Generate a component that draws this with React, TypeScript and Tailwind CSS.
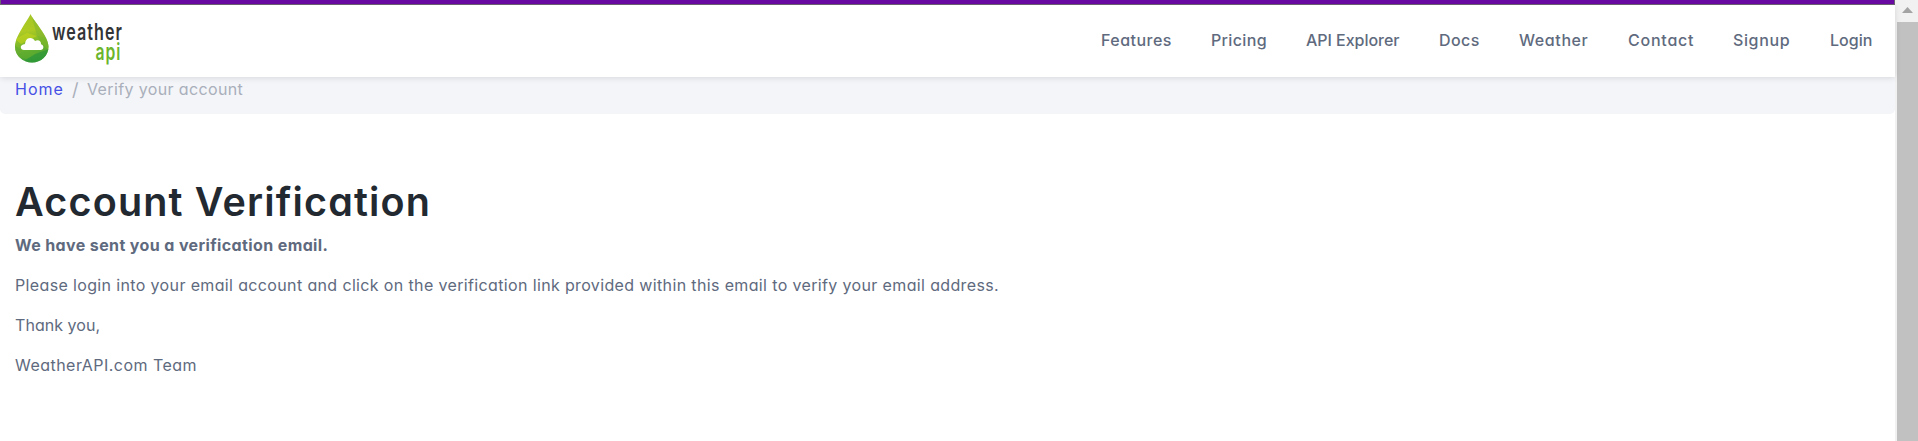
const navItems = [
  { label: "Features", box: "w-[110px]", tracking: "tracking-[0.48px]" },
  { label: "Pricing", box: "w-[95px]", tracking: "tracking-[0.35px]" },
  { label: "API Explorer", box: "w-[133px]", tracking: "tracking-[-0.03px]" },
  { label: "Docs", box: "w-[80px]", tracking: "tracking-[0.4px]" },
  { label: "Weather", box: "w-[109px]", tracking: "tracking-[0.6px]" },
  { label: "Contact", box: "w-[105px]", tracking: "tracking-[0.78px]" },
  { label: "Signup", box: "w-[97px]", tracking: "tracking-[0.62px]" },
  { label: "Login", box: "w-[65px]", tracking: "tracking-[0.05px]" },
];

function Logo() {
  return (
    <svg width="112" height="58" viewBox="0 0 112 58" className="overflow-visible [font-feature-settings:normal]" aria-label="weather api">
      <defs>
        <linearGradient id="drop" x1="0" y1="0" x2="0.15" y2="1">
          <stop offset="0" stopColor="#a2c627" />
          <stop offset="0.4" stopColor="#aeca23" />
          <stop offset="0.7" stopColor="#74b52c" />
          <stop offset="1" stopColor="#3f9f37" />
        </linearGradient>
        <clipPath id="dropShape">
          <path d="M15.5 1C18.5 8 33.5 23 33.5 33.5C33.5 43 26 49.5 17 49.5S0 43 0 33.5C0 23 12.500 8 15.5 1Z" />
        </clipPath>
      </defs>
      <g clipPath="url(#dropShape)">
        <path d="M0 0H34V50H0Z" fill="url(#drop)" />
        <path d="M16 0L34 26L22 23Z" fill="#83b52e" opacity="0.6" />
        <path d="M0 26L12 20L22 23L6 31Z" fill="#c4d51c" opacity="0.6" />
        <path d="M22 23L34 26V38L27 30Z" fill="#78b62b" opacity="0.7" />
        <path d="M0 33L8 38L0 44Z" fill="#66ad31" opacity="0.7" />
        <path d="M0 44L14 38L25 40L12 46Z" fill="#63ad2d" opacity="0.6" />
        <path d="M6 50L20 41L34 36V50Z" fill="#2f9738" opacity="0.75" />
      </g>
      <path d="M9 37C5 37 4.500 32 9 31.300C10 31.300 10 31 10.500 28.500C12 24 18 24 20 28C23.500 26 26.500 28.500 26 31.200C29.500 32 29 37 25.500 37Z" fill="#fff" />
      <text x="37" y="27" fontFamily="Inter, sans-serif" fontSize="23" fontWeight="600" letterSpacing="1.5" fill="#333436" textLength="71" lengthAdjust="spacingAndGlyphs">weather</text>
      <text x="80.500" y="47" fontFamily="Inter, sans-serif" fontSize="23" fontWeight="600" letterSpacing="1.5" fill="#6bb52d" textLength="26" lengthAdjust="spacingAndGlyphs">api</text>
    </svg>
  );
}

function Scrollbar() {
  return (
    <div className="flex w-[23px] shrink-0 flex-col bg-[#f1f1f1]">
      <div className="flex h-[22px] items-start pt-[7px] pl-[7px]">
        <svg width="11" height="6" viewBox="0 0 11 6">
          <path d="M5.500 0L11 6H0Z" fill="#a3a3a3" />
        </svg>
      </div>
      <div className="ml-[2px] flex-1 bg-[#c1c1c1]" />
    </div>
  );
}

export default function App() {
  return (
    <div className="flex h-[441px] w-[1918px] overflow-hidden bg-white font-['Inter',sans-serif] text-base text-[#606a7e] [font-feature-settings:'cv11']">
      <div className="flex min-w-0 flex-1 flex-col">
        <div className="h-[5px] border-x border-b border-[#6e6474] bg-[#6a0aa4]" />
        <header className="z-10 flex h-[72px] items-start justify-between bg-white pl-[15px] shadow-[0_1px_6px_rgba(0,0,0,0.12)]">
          <div className="pt-2">
            <Logo />
          </div>
          <nav className="flex pt-[22px]">
            {navItems.map((item) => (
              <a key={item.label} href="#" className={`whitespace-nowrap leading-[27px] font-medium ${item.box} ${item.tracking}`}>
                {item.label}
              </a>
            ))}
          </nav>
        </header>
        <div className="flex h-[37px] whitespace-nowrap rounded-b-[5px] bg-[#f4f5f8] pl-[15px] leading-[25px]">
          <a href="#" className="w-[57px] tracking-[1px] text-[#4650e5]">Home</a>
          <span className="w-[15px] text-lg leading-[25px] text-[#a9afbb]">/</span>
          <span className="tracking-[0.37px] text-[#a9afbb]">Verify your account</span>
        </div>
        <main className="whitespace-nowrap pt-[62px] pl-[15px]">
          <h1 className="h-[57px] text-[39.5px] leading-[53px] font-semibold tracking-[1.17px] text-[#222930]">Account Verification</h1>
          <p className="mb-4 leading-6 font-bold tracking-[0.38px]">We have sent you a verification email.</p>
          <p className="mb-4 leading-6 tracking-[0.36px]">
            Please login into your email account and click on the verification link provided within this email to verify your email address.
          </p>
          <p className="mb-4 leading-6 tracking-[0.05px]">Thank you,</p>
          <p className="leading-6 tracking-[0.47px]">WeatherAPI.com Team</p>
        </main>
      </div>
      <Scrollbar />
    </div>
  );
}
